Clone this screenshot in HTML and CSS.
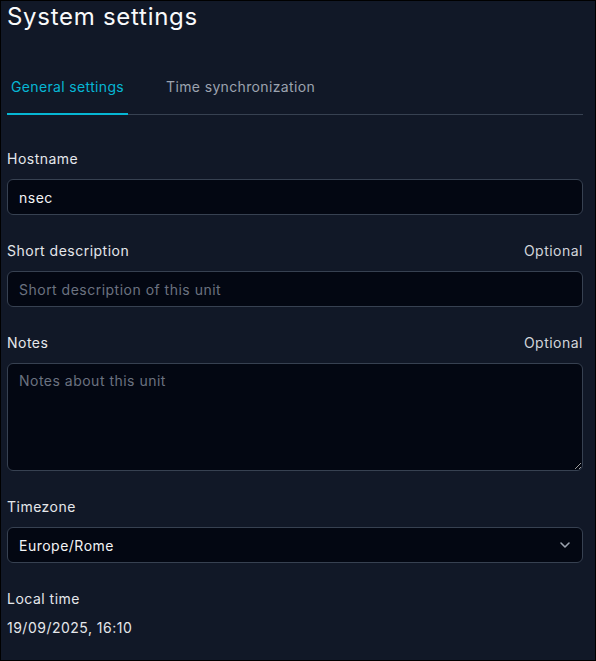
FILE: index.html
```html
<!DOCTYPE html>
<html lang="en">
<head>
  <meta charset="UTF-8">
  <title>System settings</title>
  <meta name="viewport" content="width=device-width, initial-scale=1.0">
  <link rel="stylesheet" href="styles.css">
</head>
<body>
  <div class="settings">
    <h1 class="title">System settings</h1>

    <div class="tabs">
      <div class="tab active">General settings</div>
      <div class="tab">Time synchronization</div>
    </div>

    <form class="form">
      <div class="field">
        <div class="label-row"><label for="hostname">Hostname</label></div>
        <input type="text" id="hostname" class="input" value="nsec">
      </div>

      <div class="field">
        <div class="label-row">
          <label for="description">Short description</label>
          <span class="optional">Optional</span>
        </div>
        <input type="text" id="description" class="input" placeholder="Short description of this unit">
      </div>

      <div class="field">
        <div class="label-row">
          <label for="notes">Notes</label>
          <span class="optional">Optional</span>
        </div>
        <textarea id="notes" class="input textarea" placeholder="Notes about this unit"></textarea>
      </div>

      <div class="field">
        <div class="label-row"><label for="timezone">Timezone</label></div>
        <div class="select-wrap">
          <select id="timezone" class="input select">
            <option>Europe/Rome</option>
          </select>
          <svg class="chevron" width="12" height="12" viewBox="0 0 12 12" fill="none">
            <path d="M2 4l4 4 4-4" stroke="#9ca3af" stroke-width="1.6" stroke-linecap="round" stroke-linejoin="round"/>
          </svg>
        </div>
      </div>

      <div class="field">
        <div class="label-row"><span class="label">Local time</span></div>
        <div class="value">19/09/2025, 16:10</div>
      </div>
    </form>
  </div>
</body>
</html>
```

FILE: styles.css
```css
html, body {
  height: 100%;
}
body {
  margin: 0;
  box-sizing: border-box;
  border: 1px solid #000;
  background: #111827;
  color: #e5e7eb;
  font-family: Inter, "Open Sans", sans-serif;
  font-size: 14px;
  letter-spacing: 0.035em;
  overflow: hidden;
}
.settings {
  padding: 0 12px 0 6px;
}
.title {
  margin: 0 0 30px;
  font-size: 24px;
  line-height: 32px;
  font-weight: 400;
  letter-spacing: 0.03em;
  color: #f9fafb;
}
.tabs {
  display: flex;
  gap: 34px;
  border-bottom: 1px solid #374151;
}
.tab {
  padding: 14px 4px 16px;
  line-height: 20px;
  letter-spacing: 0.025em;
  color: #9ca3af;
  margin-bottom: -1px;
  border-bottom: 2px solid transparent;
}
.tab.active {
  color: #06b6d4;
  border-bottom-color: #06b6d4;
}
.form {
  margin-top: 32px;
  display: flex;
  flex-direction: column;
  gap: 24px;
}
.field {
  display: flex;
  flex-direction: column;
  gap: 8px;
}
.label-row {
  display: flex;
  justify-content: space-between;
  line-height: 24px;
  color: #e5e7eb;
}
.optional {
  color: #d1d5db;
}
.input {
  box-sizing: border-box;
  width: 100%;
  height: 36px;
  padding: 0 11px;
  border: 1px solid #374151;
  border-radius: 6px;
  background: #030712;
  color: #f3f4f6;
  font-family: inherit;
  font-size: 14px;
  letter-spacing: inherit;
  outline: none;
}
.input::placeholder {
  color: #6b7280;
}
.textarea {
  height: 108px;
  padding: 7px 11px;
  line-height: 20px;
  resize: vertical;
}
.select-wrap {
  position: relative;
}
.select {
  appearance: none;
  -webkit-appearance: none;
}
.chevron {
  position: absolute;
  right: 12px;
  top: 12px;
  pointer-events: none;
}
.value {
  margin-top: -3px;
  line-height: 24px;
  color: #e5e7eb;
}
```
